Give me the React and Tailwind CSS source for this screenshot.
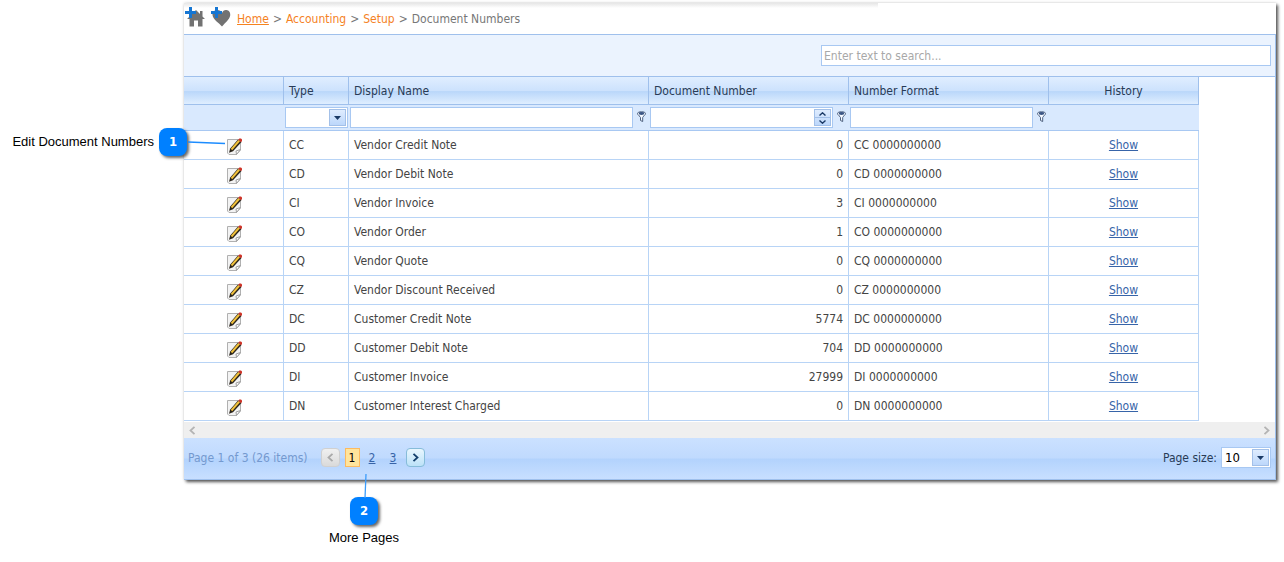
import { useState } from "react";

const documents = [
  { type: "CC", name: "Vendor Credit Note", number: 0 },
  { type: "CD", name: "Vendor Debit Note", number: 0 },
  { type: "CI", name: "Vendor Invoice", number: 3 },
  { type: "CO", name: "Vendor Order", number: 1 },
  { type: "CQ", name: "Vendor Quote", number: 0 },
  { type: "CZ", name: "Vendor Discount Received", number: 0 },
  { type: "DC", name: "Customer Credit Note", number: 5774 },
  { type: "DD", name: "Customer Debit Note", number: 704 },
  { type: "DI", name: "Customer Invoice", number: 27999 },
  { type: "DN", name: "Customer Interest Charged", number: 0 },
];

const HomeAddIcon = () => (
  <svg width="20" height="20" viewBox="0 0 20 20" aria-hidden="true">
    <path d="M11 3L2 12H4.500V19.500H9V13.500H13V19.500H17.500V12H20L17.500 9.500V4H15V7Z" fill="#727272" />
    <path d="M4 0H7V4H11V7H7V11H4V7H0V4H4Z" fill="#1676d2" />
  </svg>
);

const HeartAddIcon = () => (
  <svg width="20" height="20" viewBox="0 0 20 20" aria-hidden="true">
    <path
      d="M11 19.500C8 16 2 12.500 1.500 8C1.200 4.500 4 2.800 6.500 3C8.500 3 10.200 4.200 11 6C11.800 4 13.300 2.800 15.300 3C18 3.200 19.700 5.500 19.200 8.500C18.500 12.500 14 16 11 19.500Z"
      fill="#727272"
    />
    <path d="M4 0H7V4H11V7H7V11H4V7H0V4H4Z" fill="#1676d2" />
  </svg>
);

const EditIcon = () => (
  <svg width="16" height="17" viewBox="0 0 16 17" aria-hidden="true">
    <path d="M1.500 1.500H14.500V12L10.500 16.500H3L1.500 15Z" fill="#f3f3f3" stroke="#b0b0b0" />
    <path d="M10.500 16.500L10 13L14.500 11.500Z" fill="#fff" stroke="#a0a0a0" />
    <path d="M3 14.800L4.200 10.500L12 1.500L15.500 4L7 13.200Z" fill="#2a241b" />
    <path d="M4.800 10.700L12.300 2L14 3.300L6.200 12.200Z" fill="#f2c23c" />
    <path d="M12.300 1.800L13.300 0.500H15L16 1.500V3L15 4.200Z" fill="#cf3428" />
  </svg>
);

const FilterIcon = () => (
  <svg width="9" height="12" viewBox="0 0 9 12" aria-hidden="true">
    <path
      d="M0.500 2.500C0.500 0.200 8.500 0.200 8.500 2.500C8.500 4.200 5.700 5.500 5.700 6.500V10.500L3.500 9.500V6.500C3.500 5.500 0.500 4.200 0.500 2.500Z"
      fill="#f5f9ff"
      stroke="#4d607f"
    />
    <ellipse cx="4.500" cy="2.500" rx="2.800" ry="1.400" fill="#3b5684" />
  </svg>
);

const DropArrow = () => (
  <span className="pointer-events-none absolute top-px right-px flex h-[17px] w-[17px] items-center justify-center border border-[#a3c0e8] bg-linear-to-b from-[#dfecfe] to-[#bcd7fb]">
    <svg width="7" height="4" viewBox="0 0 7 4" className="shrink-0" aria-hidden="true">
      <path d="M0 0H7L3.500 4Z" fill="#1b3a66" />
    </svg>
  </span>
);

const Chevron = ({ direction }) => (
  <svg width="7" height="9" viewBox="0 0 7 9" fill="none" aria-hidden="true">
    <path
      d={direction === "left" ? "M5.500 0.800L1.500 4.500L5.500 8.200" : "M1.500 0.800L5.500 4.500L1.500 8.200"}
      stroke="currentColor"
      strokeWidth="1.800"
    />
  </svg>
);

function FilterButton({ label }) {
  return (
    <button type="button" aria-label={label} className="flex w-4 shrink-0 justify-center pb-0.5">
      <FilterIcon />
    </button>
  );
}

function Badge({ children }) {
  return (
    <span className="flex size-7 shrink-0 items-center justify-center rounded-lg bg-[#0080ff] font-['DejaVu_Sans_Condensed','DejaVu_Sans',sans-serif] text-[13px] font-bold text-white shadow-[2px_2px_3px_rgba(0,0,0,0.6)]">
      {children}
    </span>
  );
}

function HeaderCell({ children, className = "" }) {
  return (
    <th
      className={`h-7 border-r border-b border-[#9fc0ec] bg-[linear-gradient(#e0eeff,#cde2fd_50%,#bad7fa_54%,#dfeeff)] px-[5px] font-normal text-[#283b56] ${className}`}
    >
      {children}
    </th>
  );
}

export default function App() {
  const [search, setSearch] = useState("");
  const [typeFilter, setTypeFilter] = useState("");
  const [numberFilter, setNumberFilter] = useState("");
  const [pageSize, setPageSize] = useState("10");

  const stepNumber = (step) => setNumberFilter(String(Number(numberFilter) + step));

  return (
    <div className="flex min-h-screen bg-white pt-[3px] font-['DejaVu_Sans_Condensed','DejaVu_Sans',sans-serif] text-xs text-[#444]">
      <aside className="relative z-10 -mr-1 flex w-[188px] shrink-0 items-center justify-end gap-[5px] self-start pt-[125px] pr-px">
        <span className="font-['Liberation_Sans',sans-serif] text-[13px] text-black">
          Edit Document Numbers
        </span>
        <Badge>1</Badge>
        <svg width="38" height="4" className="absolute bottom-[11px] left-full" aria-hidden="true">
          <path d="M0 1L37 2.500" stroke="#1c8cff" strokeWidth="1.300" />
        </svg>
      </aside>

      <div className="mr-2 min-w-0 flex-1">
        <main className="bg-white shadow-[2px_2px_3px_rgba(0,0,0,0.65),0_0_3px_rgba(0,0,0,0.15)]">
          <div className="relative flex h-[31px] items-center gap-[6px] px-px">
            <div className="absolute inset-x-0 top-0 mr-[398px] h-[5px] bg-linear-to-b from-[#e6e6e6] to-white" />
            <button type="button" aria-label="Add to home" className="relative pb-[3px]">
              <HomeAddIcon />
            </button>
            <button type="button" aria-label="Add to favourites" className="relative pb-[3px]">
              <HeartAddIcon />
            </button>
            <nav className="flex gap-1 text-[#777]">
              <a href="#home" className="text-[#f5821f] underline">Home</a>
              <span>&gt;</span>
              <a href="#accounting" className="text-[#f5821f]">Accounting</a>
              <span>&gt;</span>
              <a href="#setup" className="text-[#f5821f]">Setup</a>
              <span>&gt;</span>
              <span>Document Numbers</span>
            </nav>
          </div>

          <section className="border-y border-r border-[#9fc0ec]">
            <div className="flex h-[42px] items-center justify-end border-b border-[#9fc0ec] bg-[#ebf3fe] pr-1">
              <input
                type="text"
                aria-label="Search"
                placeholder="Enter text to search..."
                value={search}
                onChange={(e) => setSearch(e.target.value)}
                className="h-[21px] w-[450px] border border-[#a8c8f2] bg-white px-[2px] outline-none placeholder:text-[#a8a8a8]"
              />
            </div>

            <div className="overflow-hidden pb-px">
              <table className="w-[1015px] table-fixed border-separate border-spacing-0">
                <colgroup>
                  <col className="w-[100px]" />
                  <col className="w-[65px]" />
                  <col className="w-[300px]" />
                  <col className="w-[200px]" />
                  <col className="w-[200px]" />
                  <col className="w-[150px]" />
                </colgroup>
                <thead>
                  <tr>
                    <HeaderCell />
                    <HeaderCell className="text-left">Type</HeaderCell>
                    <HeaderCell className="text-left">Display Name</HeaderCell>
                    <HeaderCell className="text-left">Document Number</HeaderCell>
                    <HeaderCell className="text-left">Number Format</HeaderCell>
                    <HeaderCell className="text-center">History</HeaderCell>
                  </tr>
                  <tr className="bg-[#d9e9fe]">
                    <td className="h-[26px] border-b border-[#a8c8f2] p-0" />
                    <td className="border-b border-[#a8c8f2] px-px py-0">
                      <div className="relative h-[21px] border border-[#a8c8f2] bg-white">
                        <select
                          aria-label="Filter by type"
                          value={typeFilter}
                          onChange={(e) => setTypeFilter(e.target.value)}
                          className="block h-full w-full appearance-none px-1 outline-none"
                        >
                          <option value=""></option>
                          {documents.map((doc) => (
                            <option key={doc.type}>{doc.type}</option>
                          ))}
                        </select>
                        <DropArrow />
                      </div>
                    </td>
                    <td className="border-b border-[#a8c8f2] py-0 pr-0 pl-px">
                      <div className="flex items-center">
                        <input
                          type="text"
                          aria-label="Filter by display name"
                          className="h-[21px] min-w-0 flex-1 border border-[#a8c8f2] bg-white px-1 outline-none"
                        />
                        <FilterButton label="Display name filter options" />
                      </div>
                    </td>
                    <td className="border-b border-[#a8c8f2] py-0 pr-0 pl-px">
                      <div className="flex items-center">
                        <div className="flex h-[21px] min-w-0 flex-1 border border-[#a8c8f2] bg-white p-px">
                          <input
                            type="text"
                            aria-label="Filter by document number"
                            value={numberFilter}
                            onChange={(e) => setNumberFilter(e.target.value)}
                            className="min-w-0 flex-1 px-1 text-right outline-none"
                          />
                          <div className="flex w-[17px] flex-col border border-[#a3c0e8] bg-linear-to-b from-[#dfecfe] to-[#bcd7fb] text-[#1b3a66]">
                            <button
                              type="button"
                              aria-label="Increase"
                              onClick={() => stepNumber(1)}
                              className="flex flex-1 items-center justify-center border-b border-[#a3c0e8]"
                            >
                              <svg width="7" height="4" viewBox="0 0 7 4" fill="none">
                                <path d="M0.500 3.500L3.500 0.800L6.500 3.500" stroke="currentColor" strokeWidth="1.400" />
                              </svg>
                            </button>
                            <button
                              type="button"
                              aria-label="Decrease"
                              onClick={() => stepNumber(-1)}
                              className="flex flex-1 items-center justify-center"
                            >
                              <svg width="7" height="4" viewBox="0 0 7 4" fill="none">
                                <path d="M0.500 0.500L3.500 3.200L6.500 0.500" stroke="currentColor" strokeWidth="1.400" />
                              </svg>
                            </button>
                          </div>
                        </div>
                        <FilterButton label="Document number filter options" />
                      </div>
                    </td>
                    <td className="border-b border-[#a8c8f2] py-0 pr-0 pl-px">
                      <div className="flex items-center">
                        <input
                          type="text"
                          aria-label="Filter by number format"
                          className="h-[21px] min-w-0 flex-1 border border-[#a8c8f2] bg-white px-1 outline-none"
                        />
                        <FilterButton label="Number format filter options" />
                      </div>
                    </td>
                    <td className="border-b border-[#a8c8f2] p-0" />
                  </tr>
                </thead>
                <tbody>
                  {documents.map((doc) => (
                    <tr key={doc.type} className="*:h-[29px] *:border-r *:border-b *:border-[#b8d4f6] *:px-[5px] *:py-0">
                      <td>
                        <button type="button" aria-label={`Edit ${doc.name}`} className="mx-auto block pt-[3px]">
                          <EditIcon />
                        </button>
                      </td>
                      <td>{doc.type}</td>
                      <td>{doc.name}</td>
                      <td className="text-right">{doc.number}</td>
                      <td>{doc.type} 0000000000</td>
                      <td className="text-center">
                        <a href="#history" className="text-[#3764a8] underline">Show</a>
                      </td>
                    </tr>
                  ))}
                </tbody>
              </table>
            </div>

            <div className="flex h-4 items-center justify-between bg-[#efefef] px-[5px] text-[#b4b4b4]">
              <button type="button" aria-label="Scroll left"><Chevron direction="left" /></button>
              <button type="button" aria-label="Scroll right"><Chevron direction="right" /></button>
            </div>

            <footer className="flex h-[41px] items-center justify-between bg-[linear-gradient(#cbe1ff,#c0dafe_48%,#b3d3fd_52%,#c8dfff)] px-1 pb-[2px]">
              <div className="flex items-center">
                <span className="mr-[13px] text-[#7499cf]">Page 1 of 3 (26 items)</span>
                <button
                  type="button"
                  disabled
                  aria-label="Previous page"
                  className="mr-[5px] flex size-[19px] items-center justify-center rounded border border-[#d0d0d0] bg-linear-to-b from-[#f0f0f0] to-[#dadada] text-[#a9a9a9]"
                >
                  <Chevron direction="left" />
                </button>
                <span className="flex h-[19px] w-[15px] items-center justify-center border border-[#fcba60] bg-[#ffe49c] text-black">
                  1
                </span>
                <a href="#page-2" className="w-[25px] text-center text-[#3764a8] underline">2</a>
                <a href="#page-3" className="w-[17px] text-center text-[#3764a8] underline">3</a>
                <button
                  type="button"
                  aria-label="Next page"
                  className="ml-1 flex size-[19px] items-center justify-center rounded border border-[#86bcd9] bg-linear-to-b from-[#e8f6fe] to-[#bce2f8] text-[#123e6b]"
                >
                  <Chevron direction="right" />
                </button>
              </div>
              <div className="flex items-center gap-1">
                <label htmlFor="page-size" className="text-[#283b56]">Page size:</label>
                <div className="relative h-[21px] w-[50px] border border-[#a8c8f2] bg-white">
                  <select
                    id="page-size"
                    value={pageSize}
                    onChange={(e) => setPageSize(e.target.value)}
                    className="block h-full w-full appearance-none px-[3px] text-[13px] text-black outline-none"
                  >
                    <option>10</option>
                    <option>20</option>
                    <option>50</option>
                  </select>
                  <DropArrow />
                </div>
              </div>
            </footer>
          </section>
        </main>

        <div className="relative flex w-[360px] flex-col items-center gap-1 pt-[17px]">
          <svg width="4" height="24" className="absolute top-[-6px] left-[179px]" aria-hidden="true">
            <path d="M3 0L2 24" stroke="#3b9cfb" strokeWidth="1.300" />
          </svg>
          <Badge>2</Badge>
          <span className="font-['Liberation_Sans',sans-serif] text-[13px] text-black">More Pages</span>
        </div>
      </div>
    </div>
  );
}
